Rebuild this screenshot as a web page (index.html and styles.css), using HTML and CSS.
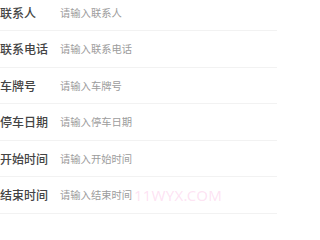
FILE: index.html
```html
<!DOCTYPE html>
<html lang="zh">
<head>
<meta charset="utf-8">
<link rel="stylesheet" href="styles.css">
</head>
<body>
<div class="form">
  <div class="row"><span class="label">联系人</span><span class="ph">请输入联系人</span></div>
  <div class="row"><span class="label">联系电话</span><span class="ph">请输入联系电话</span></div>
  <div class="row"><span class="label">车牌号</span><span class="ph">请输入车牌号</span></div>
  <div class="row"><span class="label">停车日期</span><span class="ph">请输入停车日期</span></div>
  <div class="row"><span class="label">开始时间</span><span class="ph">请输入开始时间</span></div>
  <div class="row"><span class="label">结束时间</span><span class="ph">请输入结束时间</span></div>
</div>
<div class="watermark">11WYX.COM</div>
</body>
</html>
```
FILE: styles.css
```css
html, body {
  margin: 0;
  padding: 0;
  background: #ffffff;
  overflow: hidden;
}
body {
  width: 277px;
  height: 217px;
  position: relative;
  font-family: "Noto Sans CJK SC", "Noto Sans", sans-serif;
}
.form {
  margin-top: -5.5px;
}
.row {
  height: 36.5px;
  box-sizing: border-box;
  border-bottom: 1px solid #f2f2f2;
  display: flex;
  align-items: center;
}
.label {
  width: 60px;
  font-size: 12px;
  color: #444444;
  font-weight: 500;
  white-space: nowrap;
}
.ph {
  font-size: 10.3px;
  color: #9c9c9c;
  white-space: nowrap;
}
.watermark {
  position: absolute;
  left: 134px;
  top: 185px;
  font-family: "Noto Sans", sans-serif;
  font-size: 15px;
  color: rgba(250, 160, 215, 0.3);
  white-space: nowrap;
  letter-spacing: 0.2px;
}
```
